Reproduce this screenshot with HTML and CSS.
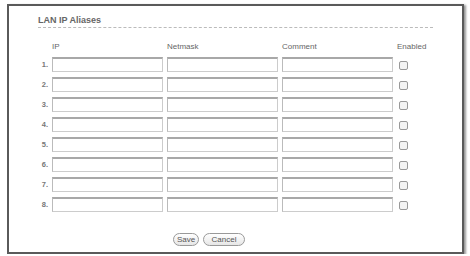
FILE: index.html
```html
<!DOCTYPE html>
<html lang="en">
<head>
    <meta charset="UTF-8">
    <title>LAN IP Aliases</title>
    <link rel="stylesheet" href="styles.css">
</head>
<body>
    <div class="frame">
        <h2 class="title">LAN IP Aliases</h2>

        <div class="aliases">
            <span></span>
            <span class="head">IP</span>
            <span class="head">Netmask</span>
            <span class="head">Comment</span>
            <span class="head">Enabled</span>

            <label>1.</label><input type="text"><input type="text"><input type="text"><span class="check"></span>
            <label>2.</label><input type="text"><input type="text"><input type="text"><span class="check"></span>
            <label>3.</label><input type="text"><input type="text"><input type="text"><span class="check"></span>
            <label>4.</label><input type="text"><input type="text"><input type="text"><span class="check"></span>
            <label>5.</label><input type="text"><input type="text"><input type="text"><span class="check"></span>
            <label>6.</label><input type="text"><input type="text"><input type="text"><span class="check"></span>
            <label>7.</label><input type="text"><input type="text"><input type="text"><span class="check"></span>
            <label>8.</label><input type="text"><input type="text"><input type="text"><span class="check"></span>
        </div>

        <div class="buttons">
            <button class="save">Save</button>
            <button class="cancel">Cancel</button>
        </div>
    </div>
</body>
</html>
```

FILE: styles.css
```css
body {
    margin: 0;
    background: #fff;
    font-family: "Liberation Sans", Arial, sans-serif;
    color: #666;
}
.frame {
    box-sizing: border-box;
    margin: 4px 0 0 7px;
    width: 457px;
    height: 250px;
    border: 2px solid #5a5a5a;
    box-shadow: 2px 1px 2px #999;
    padding: 9px 29px 0 29px;
    background: #fff;
}
.title {
    margin: 0;
    font-size: 9px;
    line-height: 10px;
    font-weight: bold;
    color: #666;
    padding-bottom: 2px;
    border-bottom: 1px dashed #bbb;
}
.aliases {
    display: grid;
    grid-template-columns: 10px 111px 111px 111px auto;
    grid-template-rows: 10px;
    grid-auto-rows: 15px;
    column-gap: 4px;
    row-gap: 5px;
    margin-top: 14px;
}
.head {
    font-size: 8px;
    line-height: 10px;
    color: #666;
}
.aliases label {
    font-size: 7.5px;
    font-weight: bold;
    line-height: 15px;
    text-align: right;
    color: #777;
}
.aliases input {
    box-sizing: border-box;
    width: 111px;
    height: 15px;
    margin: 0;
    padding: 0;
    border: 1px solid #ccc;
    border-top: 2px solid #a8a8a8;
    border-left-color: #bbb;
    background: #fff;
}
.check {
    width: 7px;
    height: 7px;
    margin: 4px 0 0 2px;
    border: 1px solid #999;
    border-radius: 2px;
    background: #f4f4f4;
}
.buttons {
    display: flex;
    gap: 4px;
    margin-top: 21px;
    padding-left: 135px;
}
.buttons button {
    font-family: "Liberation Sans", Arial, sans-serif;
    font-size: 8px;
    line-height: 9px;
    height: 13px;
    padding: 0;
    border: 1px solid #999;
    border-radius: 7px;
    background: linear-gradient(#fff, #e6e6e6);
    color: #555;
}
.save {
    width: 26px;
}
.cancel {
    width: 42px;
}
```
